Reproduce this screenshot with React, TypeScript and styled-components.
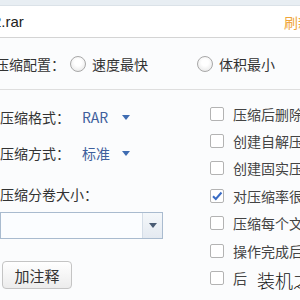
import React from 'react';
import styled, { createGlobalStyle } from 'styled-components';

const GlobalStyle = createGlobalStyle`
    html, body {
        margin: 0;
        padding: 0;
        background: #fbfcfd;
    }
    body {
        font-family: "Noto Sans CJK SC", "Noto Sans", sans-serif;
        color: #333;
    }
`;

const Frame = styled.div`
    width: 300px;
    height: 300px;
    overflow: hidden;
    display: flex;
    flex-direction: column;
    background: #fbfcfd;
`;

const TopStrip = styled.div`
    height: 5px;
    background: #e8eef3;
    border-bottom: 1px solid #dbe2e8;
`;

const FileRow = styled.div`
    height: 31px;
    background: #ffffff;
    border-bottom: 1px solid #d4d4d4;
    display: flex;
    align-items: center;
    justify-content: space-between;
    overflow: hidden;
`;

const FileName = styled.span`
    margin-left: -7px;
    font-family: "Liberation Sans", "Noto Sans CJK SC", sans-serif;
    font-size: 15px;
    color: #222;
    white-space: nowrap;
`;

const Browse = styled.span`
    margin-right: -12px;
    font-size: 14px;
    color: #f0a53a;
    white-space: nowrap;
`;

const ConfigRow = styled.div`
    height: 51px;
    border-bottom: 1px solid #dedede;
    display: flex;
    align-items: center;
    margin-left: -5px;
    font-size: 14px;
`;

const ConfigLabel = styled.span`
    width: 75px;
    white-space: nowrap;
`;

const RadioOption = styled.label<{ $width: number }>`
    display: flex;
    align-items: center;
    gap: 6px;
    width: ${p => p.$width}px;
    white-space: nowrap;
`;

const RadioCircle = styled.span`
    width: 14px;
    height: 14px;
    border-radius: 50%;
    border: 1px solid #a8a8a8;
    background: radial-gradient(circle at 50% 40%, #ffffff 30%, #e2e2e2 100%);
`;

const Body = styled.div`
    flex: 1;
    display: grid;
    grid-template-columns: 210px 1fr;
`;

const LeftCol = styled.div`
    display: flex;
    flex-direction: column;
    padding-top: 17px;
    font-size: 14px;
`;

const FieldRow = styled.div<{ $mb: number }>`
    display: flex;
    align-items: center;
    height: 20px;
    margin-bottom: ${p => p.$mb}px;
    white-space: nowrap;
`;

const FieldLabel = styled.span`
    width: 82px;
`;

const FieldValue = styled.span`
    width: 40px;
    color: #3e5f9c;
`;

const Caret = styled.span`
    width: 0;
    height: 0;
    border-left: 4px solid transparent;
    border-right: 4px solid transparent;
    border-top: 5px solid #3f6cb2;
`;

const SelectBox = styled.div`
    width: 161px;
    height: 25px;
    margin-top: 8px;
    border: 1px solid #a9bbcf;
    background: #fbfdff;
    display: flex;
    justify-content: flex-end;
`;

const SelectButton = styled.div`
    width: 19px;
    border-left: 1px solid #d4dde7;
    background: linear-gradient(#f4f7fa, #e4eaf1);
    display: flex;
    align-items: center;
    justify-content: center;
`;

const DarkCaret = styled(Caret)`
    border-top-color: #4a5c74;
`;

const CommentButton = styled.button`
    width: 70px;
    height: 28px;
    margin: 22px 0 0 2px;
    border: 1px solid #c4c4c4;
    border-radius: 4px;
    background: linear-gradient(#ffffff, #ececec);
    font-family: "Noto Sans CJK SC", sans-serif;
    font-size: 15px;
    color: #333;
    padding: 0;
`;

const RightCol = styled.div`
    display: flex;
    flex-direction: column;
    padding-top: 10px;
    font-size: 14px;
    color: #444;
`;

const CheckRow = styled.div`
    height: 27.4px;
    display: flex;
    align-items: center;
    gap: 9px;
    white-space: nowrap;
`;

const Box = styled.span`
    flex: none;
    width: 12px;
    height: 12px;
    border: 1px solid #b3b3b3;
    border-radius: 2px;
    background: #fff;
    display: flex;
    align-items: center;
    justify-content: center;
`;

const Watermark = styled.span`
    margin-left: 1px;
    margin-top: 4px;
    font-weight: 300;
    font-size: 18px;
    color: #111;
    white-space: nowrap;
`;

const checks = [
    { text: '压缩后删除原来的文件', checked: false },
    { text: '创建自解压格式压缩文件', checked: false },
    { text: '创建固实压缩文件', checked: false },
    { text: '对压缩率很高的文件', checked: true },
    { text: '压缩每个文件到单独的压缩包', checked: false },
    { text: '操作完成后关机', checked: false },
    { text: '后', checked: false, mark: true },
];

const App = () => {
    return (
        <Frame>
            <GlobalStyle />
            <TopStrip />
            <FileRow>
                <FileName>2.rar</FileName>
                <Browse>刷新</Browse>
            </FileRow>
            <ConfigRow>
                <ConfigLabel>压缩配置：</ConfigLabel>
                <RadioOption $width={127}>
                    <RadioCircle />
                    速度最快
                </RadioOption>
                <RadioOption $width={100}>
                    <RadioCircle />
                    体积最小
                </RadioOption>
            </ConfigRow>
            <Body>
                <LeftCol>
                    <FieldRow $mb={16}>
                        <FieldLabel>压缩格式：</FieldLabel>
                        <FieldValue>RAR</FieldValue>
                        <Caret />
                    </FieldRow>
                    <FieldRow $mb={21}>
                        <FieldLabel>压缩方式：</FieldLabel>
                        <FieldValue>标准</FieldValue>
                        <Caret />
                    </FieldRow>
                    <FieldRow $mb={0}>压缩分卷大小：</FieldRow>
                    <SelectBox>
                        <SelectButton>
                            <DarkCaret />
                        </SelectButton>
                    </SelectBox>
                    <CommentButton>加注释</CommentButton>
                </LeftCol>
                <RightCol>
                    {checks.map(c => (
                        <CheckRow key={c.text}>
                            <Box>
                                {c.checked && (
                                    <svg width="12" height="12" viewBox="0 0 12 12">
                                        <path d="M2 6.2 L4.8 9 L10.5 2.5" fill="none" stroke="#3a6cc4" strokeWidth="2" />
                                    </svg>
                                )}
                            </Box>
                            {c.text}
                            {c.mark && <Watermark>装机之家</Watermark>}
                        </CheckRow>
                    ))}
                </RightCol>
            </Body>
        </Frame>
    );
};

export default App;
